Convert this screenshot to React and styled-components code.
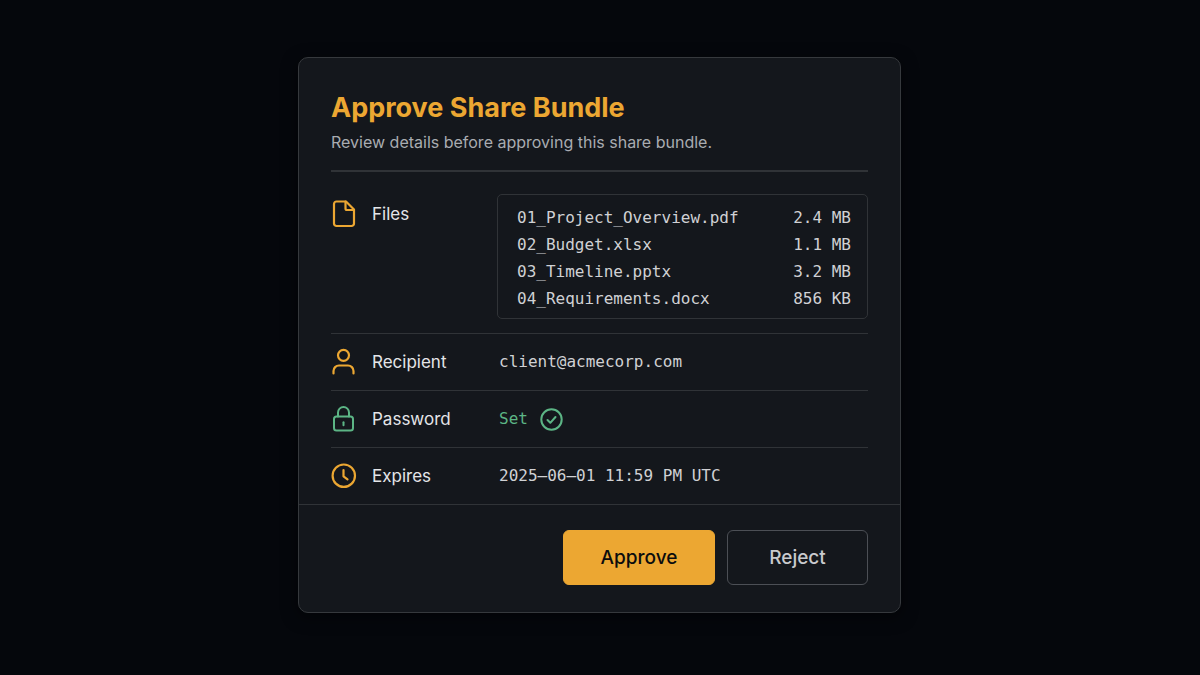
import React from "react";
import styled, { createGlobalStyle } from "styled-components";

const PAGE = "#05070c";
const PANEL = "#14171c";
const LINE = "#303337";
const AMBER = "#eca732";
const GREEN = "#5cb585";
const SANS = `Inter, "Liberation Sans", sans-serif`;
const MONO = `"DejaVu Sans Mono", "Liberation Mono", monospace`;

const GlobalStyle = createGlobalStyle`
  * {
    box-sizing: border-box;
  }

  body {
    margin: 0;
    background: ${PAGE};
    font-family: ${SANS};
  }
`;

const Page = styled.main`
  min-height: 100vh;
  display: flex;
  align-items: center;
  justify-content: center;
  padding: 0 1px 6px 0;
`;

const Card = styled.section`
  width: 100%;
  max-width: 603px;
  background: ${PANEL};
  border: 1px solid #36393d;
  border-radius: 10px;
  box-shadow: 0 4px 16px rgba(0, 0, 0, 0.5);
`;

const Body = styled.div`
  padding: 33px 32px 0;
`;

const Header = styled.header`
  padding-bottom: 16px;
  border-bottom: 2px solid ${LINE};
`;

const Title = styled.h1`
  margin: 0;
  font-size: 27px;
  font-weight: 700;
  line-height: 34px;
  color: ${AMBER};
`;

const Subtitle = styled.p`
  margin: 5px 0 0;
  font-size: 16px;
  line-height: 24px;
  color: #a9acb1;
`;

const Details = styled.dl`
  margin: 0;
`;

const Row = styled.div`
  display: grid;
  grid-template-columns: 166px 1fr;
  align-items: ${(props) => (props.$top ? "start" : "center")};
  min-height: 57px;
  padding: ${(props) => (props.$top ? "22px 0 14px" : "0")};

  & + & {
    border-top: 1px solid ${LINE};
  }
`;

const Label = styled.dt`
  display: flex;
  align-items: center;
  gap: 15px;
  height: 40px;
  font-size: 17px;
  color: #e4e5e8;
`;

const Value = styled.dd`
  display: flex;
  align-items: center;
  gap: 12px;
  margin: 0;
  padding-left: ${(props) => (props.$flush ? "0" : "2px")};
  font-family: ${MONO};
  font-size: 16px;
  color: ${(props) => (props.$ok ? GREEN : "#d0d1d4")};
`;

const FileBox = styled.div`
  width: 100%;
  padding: 9px 16px 6px 19px;
  border: 1px solid ${LINE};
  border-radius: 5px;
`;

const FileTable = styled.table`
  width: 100%;
  border-collapse: collapse;
  line-height: 27px;

  td {
    padding: 0;
  }

  td:last-child {
    text-align: right;
  }
`;

const Icon = styled.svg`
  flex: none;
  display: block;
  fill: none;
  stroke: ${(props) => props.$color || AMBER};
  stroke-width: 2.2;
  stroke-linecap: round;
  stroke-linejoin: round;
`;

const Footer = styled.footer`
  display: flex;
  justify-content: flex-end;
  gap: 12px;
  padding: 25px 32px 27px;
  border-top: 1px solid ${LINE};
`;

const Button = styled.button`
  height: 55px;
  width: ${(props) => (props.$primary ? "152px" : "141px")};
  border: 1px solid ${(props) => (props.$primary ? AMBER : "#4c4f55")};
  border-radius: 6px;
  background: ${(props) => (props.$primary ? AMBER : "transparent")};
  color: ${(props) => (props.$primary ? "#0b0c0e" : "#c9cacd")};
  font-family: ${SANS};
  font-size: 19px;
  font-weight: 500;
  cursor: pointer;
`;

const FileIcon = () => (
  <Icon width="26" height="28" viewBox="0 0 26 28" aria-hidden="true">
    <path d="M5.5 1.5H15l8 8v14a2.5 2.5 0 0 1-2.5 2.5h-15A2.5 2.5 0 0 1 3 23.5V4a2.5 2.5 0 0 1 2.5-2.5z" />
    <path d="M14.5 1.5v7A1.5 1.5 0 0 0 16 10h7" />
  </Icon>
);

const UserIcon = () => (
  <Icon width="26" height="28" viewBox="0 0 26 28" aria-hidden="true">
    <circle cx="12.5" cy="7.3" r="5.5" />
    <path d="M2.5 25.5V23A5.5 5.5 0 0 1 8 17.5h9a5.5 5.5 0 0 1 5.5 5.5v2.5" />
  </Icon>
);

const LockIcon = () => (
  <Icon width="26" height="28" viewBox="0 0 26 28" $color={GREEN} aria-hidden="true">
    <g strokeWidth="2">
      <rect x="3" y="11.5" width="19" height="14" rx="2.5" />
      <path d="M7 11.5v-4a5.5 5.5 0 0 1 11 0v4" />
      <path d="M12.5 17.3v2.9" />
    </g>
  </Icon>
);

const ClockIcon = () => (
  <Icon width="26" height="28" viewBox="0 0 26 28" aria-hidden="true">
    <circle cx="12.8" cy="13.7" r="11.2" />
    <path d="M12.5 8v6.3l4 3" />
  </Icon>
);

const CheckIcon = () => (
  <Icon width="24" height="24" viewBox="0 0 24 24" $color={GREEN} aria-hidden="true">
    <g strokeWidth="2">
      <circle cx="11.5" cy="12.5" r="10.2" />
      <path d="M7.5 13l2.8 2.8 5.2-5.8" />
    </g>
  </Icon>
);

const files = [
  { name: "01_Project_Overview.pdf", size: "2.4 MB" },
  { name: "02_Budget.xlsx", size: "1.1 MB" },
  { name: "03_Timeline.pptx", size: "3.2 MB" },
  { name: "04_Requirements.docx", size: "856 KB" },
];

const App = () => (
  <>
    <GlobalStyle />
    <Page>
      <Card aria-labelledby="share-title">
        <Body>
          <Header>
            <Title id="share-title">Approve Share Bundle</Title>
            <Subtitle>Review details before approving this share bundle.</Subtitle>
          </Header>
          <Details>
            <Row $top>
              <Label>
                <FileIcon />
                Files
              </Label>
              <Value $flush>
                <FileBox>
                  <FileTable>
                    <tbody>
                      {files.map((file) => (
                        <tr key={file.name}>
                          <td>{file.name}</td>
                          <td>{file.size}</td>
                        </tr>
                      ))}
                    </tbody>
                  </FileTable>
                </FileBox>
              </Value>
            </Row>
            <Row>
              <Label>
                <UserIcon />
                Recipient
              </Label>
              <Value>client@acmecorp.com</Value>
            </Row>
            <Row>
              <Label>
                <LockIcon />
                Password
              </Label>
              <Value $ok>
                Set
                <CheckIcon />
              </Value>
            </Row>
            <Row>
              <Label>
                <ClockIcon />
                Expires
              </Label>
              <Value>2025–06–01 11:59 PM UTC</Value>
            </Row>
          </Details>
        </Body>
        <Footer>
          <Button type="button" $primary>
            Approve
          </Button>
          <Button type="button">Reject</Button>
        </Footer>
      </Card>
    </Page>
  </>
);

export default App;
